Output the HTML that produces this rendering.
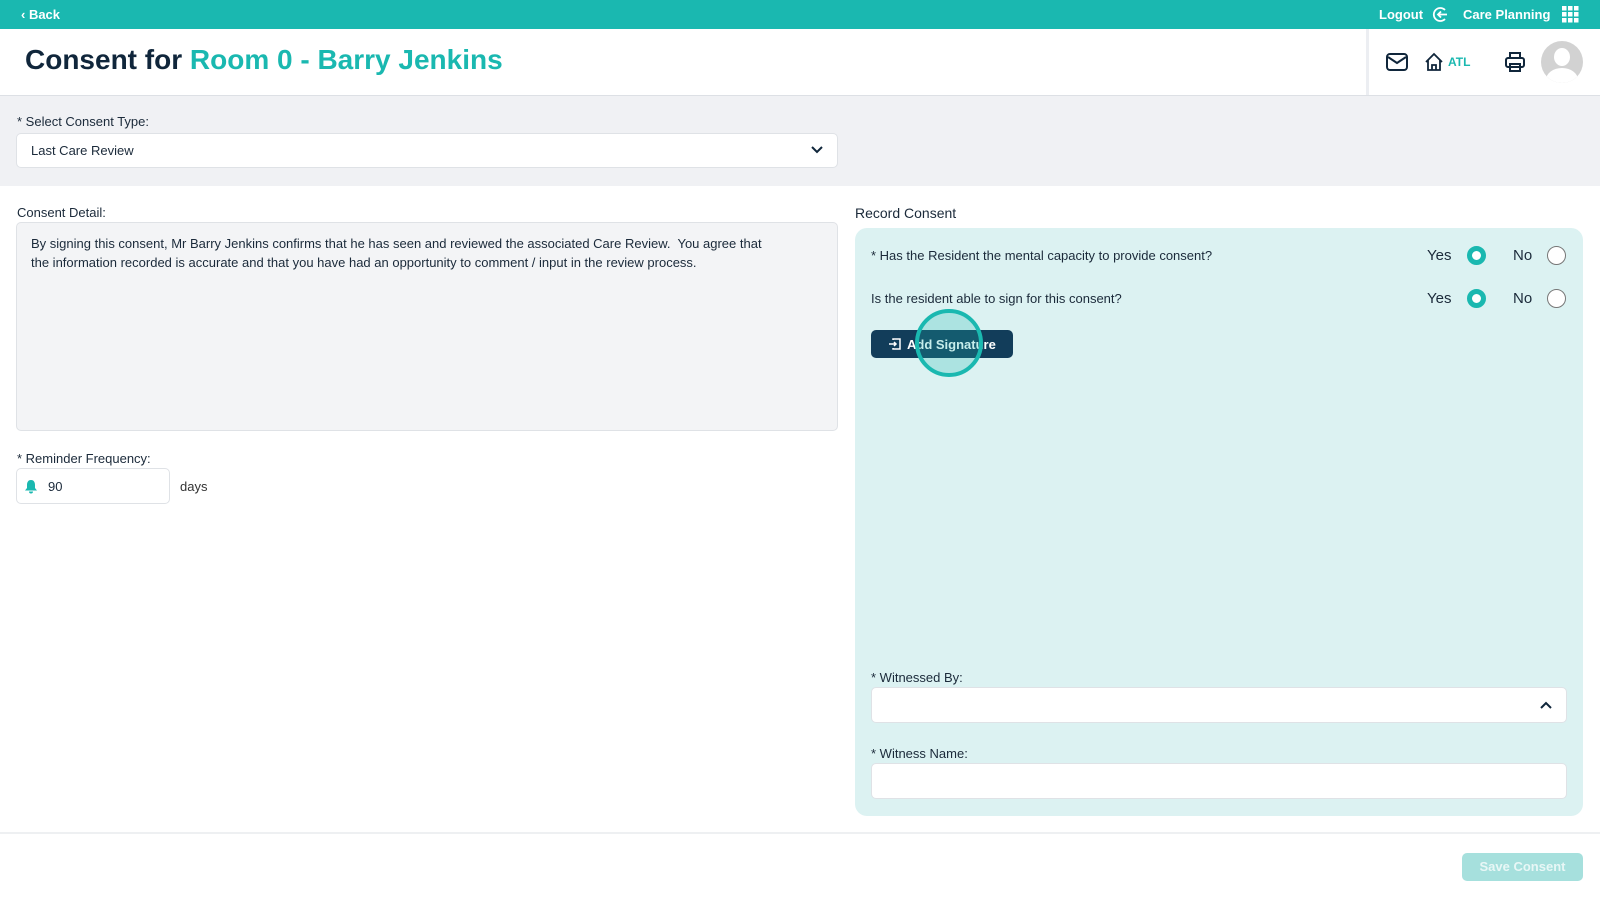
<!DOCTYPE html>
<html><head><meta charset="utf-8"><style>
*{box-sizing:border-box;margin:0;padding:0}
body{width:1600px;height:900px;overflow:hidden;background:#fff;font-family:"Liberation Sans",sans-serif;color:#1b2a3a;position:relative}
.a{position:absolute}
.lbl{font-size:13px;color:#1b2a3a}
.box{background:#fff;border:1px solid #dfe2e6;border-radius:5px}
.radio{width:19px;height:19px;border-radius:50%}
.on{border:5px solid #1ab8b0;background:#fff}
.off{border:1.5px solid #777;background:#fff}
</style></head><body>
<div class="a" style="left:0;top:0;width:1600px;height:29px;background:#1ab8b0"></div>
<div class="a" style="left:21px;top:7px;color:#fff;font-size:13px;font-weight:bold">‹ Back</div>
<div class="a" style="left:1379px;top:7px;color:#fff;font-size:13px;font-weight:bold">Logout</div>
<svg class="a" style="left:1432px;top:6px" width="17" height="17" viewBox="0 0 17 17" fill="none" stroke="#fff" stroke-width="1.8"><path d="M13 4A6.5 6.5 0 1 0 13 13"/><path d="M15 8.5H6M9 5.5L6 8.5 9 11.5"/></svg>
<div class="a" style="left:1463px;top:7px;color:#fff;font-size:13px;font-weight:bold">Care Planning</div>
<svg class="a" style="left:1562px;top:6px" width="17" height="17" fill="#fff"><rect x="0" y="0" width="4.5" height="4.5"/><rect x="6" y="0" width="4.5" height="4.5"/><rect x="12" y="0" width="4.5" height="4.5"/><rect x="0" y="6" width="4.5" height="4.5"/><rect x="6" y="6" width="4.5" height="4.5"/><rect x="12" y="6" width="4.5" height="4.5"/><rect x="0" y="12" width="4.5" height="4.5"/><rect x="6" y="12" width="4.5" height="4.5"/><rect x="12" y="12" width="4.5" height="4.5"/></svg>

<div class="a" style="left:25px;top:44px;font-size:28px;font-weight:bold;color:#10263b">Consent for <span style="color:#1ab8b0">Room 0 - Barry Jenkins</span></div>
<div class="a" style="left:1366px;top:29px;width:3px;height:66px;background:#eceef2"></div>
<svg class="a" style="left:1386px;top:53px" width="22" height="18" fill="none" stroke="#10263b" stroke-width="2"><rect x="1" y="1" width="20" height="16" rx="3"/><path d="M2 4l9 6 9-6"/></svg>
<svg class="a" style="left:1424px;top:52px" width="20" height="20" fill="none" stroke="#10263b" stroke-width="1.8"><path d="M2 10L10 2l8 8M4 8v10h12V8M8 18v-5h4v5"/></svg>
<div class="a" style="left:1448px;top:55px;color:#1ab8b0;font-size:12px;font-weight:bold">ATL</div>
<svg class="a" style="left:1504px;top:51px" width="22" height="22" fill="none" stroke="#10263b" stroke-width="2"><path d="M6 7V2h10v5"/><rect x="2" y="7" width="18" height="9" rx="2"/><rect x="6" y="13" width="10" height="7"/></svg>
<div class="a" style="left:1541px;top:41px;width:42px;height:42px;border-radius:50%;background:#d2d2d2;overflow:hidden"><div class="a" style="left:13px;top:7px;width:16px;height:18px;border-radius:50%;background:#fff"></div><div class="a" style="left:5px;top:27px;width:32px;height:24px;border-radius:50%;background:#fff"></div></div>

<div class="a" style="left:0;top:95px;width:1600px;height:91px;background:#f0f1f4;border-top:1px solid #dde0e5"></div>
<div class="a lbl" style="left:17px;top:114px">* Select Consent Type:</div>
<div class="a box" style="left:16px;top:133px;width:822px;height:35px"></div>
<div class="a" style="left:31px;top:143px;font-size:13px">Last Care Review</div>
<svg class="a" style="left:811px;top:145px" width="12" height="10" fill="none" stroke="#10263b" stroke-width="2"><path d="M1 2l5 5 5-5"/></svg>

<div class="a lbl" style="left:17px;top:205px">Consent Detail:</div>
<div class="a" style="left:16px;top:222px;width:822px;height:209px;background:#f3f4f6;border:1px solid #dfe2e6;border-radius:5px;padding:11px 40px 11px 14px;font-size:13px;line-height:19px;color:#1b2a3a">By signing this consent, Mr Barry Jenkins confirms that he has seen and reviewed the associated Care Review.&nbsp; You agree that<br>the information recorded is accurate and that you have had an opportunity to comment / input in the review process.</div>

<div class="a lbl" style="left:17px;top:451px">* Reminder Frequency:</div>
<div class="a box" style="left:16px;top:468px;width:154px;height:36px"></div>
<svg class="a" style="left:24px;top:479px" width="14" height="15" fill="#1ab8b0"><path d="M7 1C4 1 3 3.5 3 6v3L1 11.5h12L11 9V6c0-2.5-1-5-4-5zM5 12.5a2 2 0 0 0 4 0z"/></svg>
<div class="a" style="left:48px;top:479px;font-size:13px">90</div>
<div class="a" style="left:180px;top:479px;font-size:13px;color:#333">days</div>

<div class="a" style="left:855px;top:205px;font-size:14px">Record Consent</div>
<div class="a" style="left:855px;top:228px;width:728px;height:588px;background:#dcf2f2;border-radius:12px"></div>
<div class="a lbl" style="left:871px;top:248px">* Has the Resident the mental capacity to provide consent?</div>
<div class="a" style="left:1427px;top:247px;font-size:15px">Yes</div>
<div class="a radio on" style="left:1467px;top:246px"></div>
<div class="a" style="left:1513px;top:247px;font-size:15px">No</div>
<div class="a radio off" style="left:1547px;top:246px"></div>
<div class="a lbl" style="left:871px;top:291px">Is the resident able to sign for this consent?</div>
<div class="a" style="left:1427px;top:290px;font-size:15px">Yes</div>
<div class="a radio on" style="left:1467px;top:289px"></div>
<div class="a" style="left:1513px;top:290px;font-size:15px">No</div>
<div class="a radio off" style="left:1547px;top:289px"></div>
<div class="a" style="left:871px;top:330px;width:142px;height:28px;background:#123d5a;border-radius:5px;color:#fff;font-size:13px;font-weight:bold;padding:7px 0 0 36px">Add Signature</div>
<svg class="a" style="left:888px;top:337px" width="14" height="14" fill="none" stroke="#fff" stroke-width="1.5"><path d="M5 3V2h7v10H5v-1M1 7h7M6 5l2 2-2 2"/></svg>
<div class="a" style="left:915px;top:309px;width:68px;height:68px;border-radius:50%;border:4px solid #1ab8b0;background:rgba(26,184,176,0.25)"></div>

<div class="a lbl" style="left:871px;top:670px">* Witnessed By:</div>
<div class="a box" style="left:871px;top:687px;width:696px;height:36px"></div>
<svg class="a" style="left:1540px;top:700px" width="12" height="10" fill="none" stroke="#10263b" stroke-width="2"><path d="M1 8l5-5 5 5"/></svg>
<div class="a lbl" style="left:871px;top:746px">* Witness Name:</div>
<div class="a box" style="left:871px;top:763px;width:696px;height:36px"></div>

<div class="a" style="left:0;top:832px;width:1600px;height:2px;background:#eef0f2"></div>
<div class="a" style="left:1462px;top:853px;width:121px;height:28px;background:#a6e0dd;border-radius:5px;color:#e8f7f6;font-size:13px;font-weight:bold;text-align:center;line-height:28px">Save Consent</div>
</body></html>
